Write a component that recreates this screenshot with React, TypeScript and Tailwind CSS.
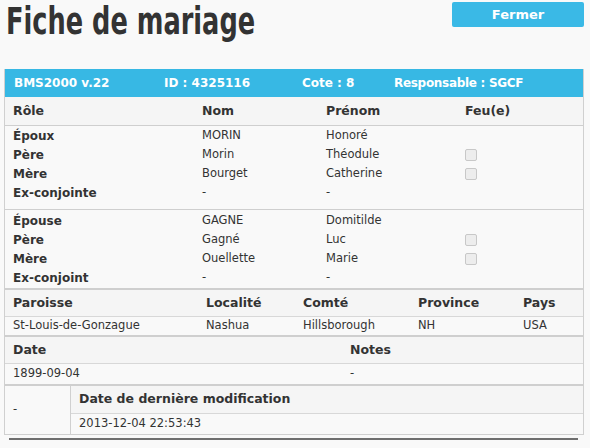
import React from 'react';

const body = { fontFamily: '"DejaVu Sans", Verdana, sans-serif' };

type Person = { role: string; nom: string; prenom: string; feu?: boolean };

const epoux: Person[] = [
  { role: 'Époux', nom: 'MORIN', prenom: 'Honoré' },
  { role: 'Père', nom: 'Morin', prenom: 'Théodule', feu: true },
  { role: 'Mère', nom: 'Bourget', prenom: 'Catherine', feu: true },
  { role: 'Ex-conjointe', nom: '-', prenom: '-' },
];

const epouse: Person[] = [
  { role: 'Épouse', nom: 'GAGNE', prenom: 'Domitilde' },
  { role: 'Père', nom: 'Gagné', prenom: 'Luc', feu: true },
  { role: 'Mère', nom: 'Ouellette', prenom: 'Marie', feu: true },
  { role: 'Ex-conjoint', nom: '-', prenom: '-' },
];

const Checkbox = () => (
  <span className="inline-block w-[12px] h-[12px] rounded-[2px] border border-[#c8c8c8] bg-[#ededed]" />
);

const PersonRows = ({ people }: { people: Person[] }) => (
  <>
    {people.map((p, i) => (
      <div key={i} className="grid grid-cols-[189px_124px_139px_1fr] h-[19px] items-center pl-[8px]">
        <span className="font-bold text-[12px]">{p.role}</span>
        <span>{p.nom}</span>
        <span>{p.prenom}</span>
        <span className="flex">{p.feu && <Checkbox />}</span>
      </div>
    ))}
  </>
);

export default function App() {
  return (
    <div className="w-[590px] h-[448px] bg-[#f9f9f9] text-[#333] text-[11.5px] overflow-hidden" style={body}>
      {/* Title + close button */}
      <div className="flex justify-between items-start h-[69px]">
        <h1
          className="ml-[6px] mt-[2px] text-[37px] leading-[40px] font-bold text-[#333] origin-left scale-x-[0.77] whitespace-nowrap"
          style={{ fontFamily: '"DejaVu Sans Condensed", "DejaVu Sans", sans-serif' }}
        >
          Fiche de mariage
        </h1>
        <button className="mt-[2px] mr-[6px] w-[132px] h-[25px] rounded-[2px] bg-[#3ab9e6] text-white font-bold text-[13px]">
          Fermer
        </button>
      </div>

      <div className="mx-[4px] w-[580px] border-x border-[#d0d0d0]">
        {/* Blue info bar */}
        <div className="bg-[#37b8e4] h-[28px] flex items-center pl-[9px] text-white font-bold text-[12px]">
          <span className="w-[150px]">BMS2000 v.22</span>
          <span className="w-[138px]">ID : 4325116</span>
          <span className="w-[92px]">Cote : 8</span>
          <span className="tracking-[-0.3px]">Responsable : SGCF</span>
        </div>

        {/* People */}
        <div className="grid grid-cols-[189px_124px_139px_1fr] h-[29px] items-center pl-[8px] font-bold text-[12.5px] bg-[#f5f5f5] border-b border-[#cfcfcf]">
          <span>Rôle</span>
          <span>Nom</span>
          <span>Prénom</span>
          <span>Feu(e)</span>
        </div>
        <div className="pb-[7px] border-b border-[#cfcfcf]">
          <PersonRows people={epoux} />
        </div>
        <div className="pt-[1px] pb-[1px] border-b-[2px] border-[#cfcfcf]">
          <PersonRows people={epouse} />
        </div>

        {/* Place */}
        <div className="grid grid-cols-[193px_97px_115px_105px_1fr] h-[27px] items-center pl-[8px] font-bold text-[12.5px] bg-[#f5f5f5] border-b border-[#d8d8d8]">
          <span>Paroisse</span>
          <span>Localité</span>
          <span>Comté</span>
          <span>Province</span>
          <span>Pays</span>
        </div>
        <div className="grid grid-cols-[193px_97px_115px_105px_1fr] h-[20px] items-center pl-[8px] border-b-[2px] border-[#cfcfcf]">
          <span>St-Louis-de-Gonzague</span>
          <span>Nashua</span>
          <span>Hillsborough</span>
          <span>NH</span>
          <span>USA</span>
        </div>

        {/* Date / Notes */}
        <div className="grid grid-cols-[337px_1fr] h-[27px] items-center pl-[8px] font-bold text-[12.5px] bg-[#f5f5f5] border-b border-[#d8d8d8]">
          <span>Date</span>
          <span>Notes</span>
        </div>
        <div className="grid grid-cols-[337px_1fr] h-[22px] items-center pl-[8px] border-b-[2px] border-[#cfcfcf]">
          <span>1899-09-04</span>
          <span>-</span>
        </div>

        {/* Last modification */}
        <div className="flex border-b border-[#d0d0d0]">
          <div className="w-[66px] flex items-center pl-[8px] border-r border-[#d0d0d0]">-</div>
          <div className="flex-1">
            <div className="h-[28px] flex items-center pl-[8px] font-bold text-[12.5px] bg-[#f5f5f5] border-b border-[#d8d8d8]">
              Date de dernière modification
            </div>
            <div className="h-[20px] flex items-center pl-[8px]">2013-12-04 22:53:43</div>
          </div>
        </div>
      </div>
      <div className="ml-[9px] mt-[3px] w-[569px] border-t-[2px] border-[#6f6f6f]" />
    </div>
  );
}
